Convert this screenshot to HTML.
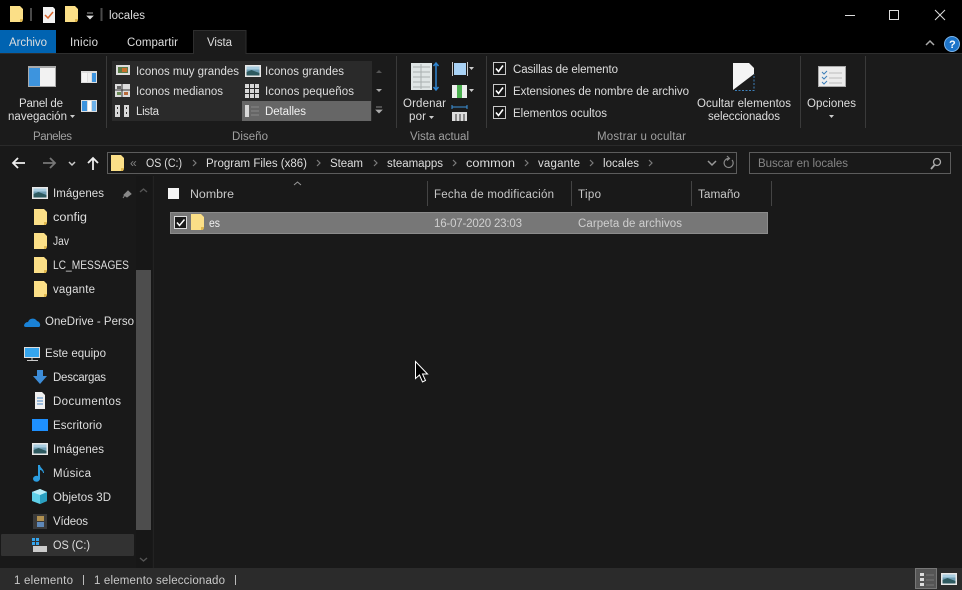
<!DOCTYPE html>
<html><head><meta charset="utf-8"><style>
html,body{margin:0;padding:0;background:#191919;width:962px;height:590px;overflow:hidden}
svg{display:block;filter:blur(.3px)}
text{font-family:"Liberation Sans",sans-serif;font-size:11.5px;fill:#dedede}
.d{fill:#a0a0a0}.g{fill:#858585}
</style></head><body>
<svg width="962" height="590" viewBox="0 0 962 590" xmlns="http://www.w3.org/2000/svg">
<defs>
<g id="f"><path d="M0 0h10l3 3v11l-1 1v1H0z" fill="#fbdf87"/><path d="M10 13h3v1l-1 2h-2z" fill="#e0b84e"/></g>
<g id="c"><rect x=".5" y=".5" width="12" height="12" fill="#151515" stroke="#c8c8c8"/><path d="M3 6.500l2.500 3L10 3.500" fill="none" stroke="#fff" stroke-width="1.600"/></g>
<path id="ch" d="M0 0l3 3-3 3" fill="none" stroke="#7c7c7c" stroke-width="1.200"/>
<g id="img"><rect width="16" height="12" fill="#e8e8e8"/><rect x="1.500" y="1.500" width="13" height="9" fill="#6f9eb5"/><path d="M1.500 7l5-2 8 3v2.500h-13z" fill="#2e5a60"/><rect x="1.500" y="1.500" width="13" height="3" fill="#a9cde0"/></g>
</defs>

<!-- title bar -->
<rect width="962" height="53" fill="#000"/>
<use href="#f" x="10" y="6"/>
<rect x="30" y="8" width="2" height="13" fill="#4a4a4a"/>
<path d="M43 7h10l2 2v14H43z" fill="#f1f1f1"/><path d="M45 15l3 3 5-6" fill="none" stroke="#d9632a" stroke-width="1.500"/>
<use href="#f" x="65" y="6"/>
<path d="M87 13h6M87 16h6l-3 3z" fill="#ddd" stroke="#ddd" stroke-width=".7"/>
<rect x="100.500" y="8" width="2" height="13" fill="#4a4a4a"/>
<text x="109" y="19" textLength="36">locales</text>
<rect x="845" y="15" width="10" height="1" fill="#ddd"/>
<rect x="889.500" y="10.500" width="9" height="9" fill="none" stroke="#ddd"/>
<path d="M935 10l10 10M945 10l-10 10" stroke="#ddd" fill="none"/>

<!-- tabs -->
<rect x="0" y="30" width="56" height="23" fill="#0063b1"/>
<text x="9" y="46" textLength="38">Archivo</text>
<text x="70" y="46" textLength="28">Inicio</text>
<text x="127" y="46" textLength="51">Compartir</text>
<path d="M926 45l4-4 4 4" fill="none" stroke="#aaa" stroke-width="1.500"/>
<circle cx="952" cy="44" r="7.500" fill="#1d74c9" stroke="#7db5ea"/>
<text x="949" y="48" style="font-size:11px;font-weight:bold;fill:#fff">?</text>

<!-- ribbon -->
<rect x="0" y="53" width="962" height="92" fill="#1b1b1b"/>
<rect x="0" y="53" width="962" height="1" fill="#2e2e2e"/>
<rect x="193" y="30" width="53" height="24" fill="#1b1b1b"/>
<path d="M193.500 54V30.500h52.500V54" fill="none" stroke="#2e2e2e"/>
<text x="207" y="46" textLength="25">Vista</text>
<rect y="145" width="962" height="1" fill="#2a2a2a"/>
<g fill="#3a3a3a"><rect x="106" y="56" width="1" height="72"/><rect x="396" y="56" width="1" height="72"/><rect x="486" y="56" width="1" height="72"/><rect x="800" y="56" width="1" height="72"/><rect x="865" y="56" width="1" height="72"/></g>

<!-- paneles -->
<rect x="28" y="66" width="28" height="21" fill="#aaa"/><rect x="29" y="68" width="11" height="18" fill="#3d94de"/><rect x="40" y="68" width="15" height="18" fill="#f2f2f2"/>
<rect x="81" y="71" width="16" height="12" fill="#ddd"/><rect x="82" y="73" width="5" height="9" fill="#f4f4f4"/><rect x="88" y="73" width="3" height="9" fill="#eee"/><rect x="92" y="73" width="4" height="9" fill="#3d94de"/>
<rect x="81" y="100" width="16" height="12" fill="#ddd"/><rect x="82" y="101" width="5" height="10" fill="#3d94de"/><rect x="88" y="101" width="3" height="10" fill="#fff"/><rect x="92" y="101" width="4" height="10" fill="#6eb1e8"/>
<text x="19" y="107" textLength="44">Panel de</text>
<text x="8" y="120" textLength="59">navegación</text>
<path d="M70 115h5l-2.500 3z" fill="#ccc"/>
<text class="d" x="33" y="140" textLength="39">Paneles</text>

<!-- gallery -->
<rect x="112" y="61" width="260" height="60" fill="#2a2a2a"/>
<rect x="242" y="101" width="129" height="20" fill="#666"/>
<g transform="translate(116 65)"><rect width="14" height="10" fill="#ddd"/><rect x="2" y="2" width="10" height="6" fill="#5b7d4a"/><rect x="6" y="3" width="5" height="4" fill="#c9702e"/></g>
<use href="#img" x="245" y="65"/>
<g transform="translate(115 84)"><rect width="15" height="13" fill="#ddd"/><path d="M0 6h15M7 0v13" stroke="#333"/><rect x="2" y="2" width="4" height="3" fill="#666"/><rect x="9" y="8" width="4" height="3" fill="#b86a3a"/><rect x="2" y="8" width="4" height="3" fill="#6a8a55"/></g>
<g fill="#d8d8d8"><rect x="245" y="84" width="4" height="4"/><rect x="250" y="84" width="4" height="4"/><rect x="255" y="84" width="4" height="4"/><rect x="245" y="89" width="4" height="4"/><rect x="250" y="89" width="4" height="4"/><rect x="255" y="89" width="4" height="4"/><rect x="245" y="94" width="4" height="4"/><rect x="250" y="94" width="4" height="4"/><rect x="255" y="94" width="4" height="4"/></g>
<g fill="#d8d8d8"><rect x="115" y="105" width="5" height="12"/><rect x="124" y="105" width="5" height="12"/></g>
<g fill="#333"><rect x="117" y="107" width="1" height="2"/><rect x="117" y="112" width="1" height="2"/><rect x="126" y="107" width="1" height="2"/><rect x="126" y="112" width="1" height="2"/></g>
<rect x="245" y="105" width="4" height="12" fill="#d8d8d8"/><path d="M251 107h8M251 111h8M251 115h8" stroke="#888"/>
<text x="136" y="75" textLength="103">Iconos muy grandes</text>
<text x="265" y="75" textLength="79">Iconos grandes</text>
<text x="136" y="95" textLength="87">Iconos medianos</text>
<text x="265" y="95" textLength="89">Iconos pequeños</text>
<text x="136" y="115" textLength="23">Lista</text>
<text x="265" y="115" textLength="41" style="fill:#f0f0f0">Detalles</text>
<path d="M376 73l3-3 3 3z" fill="#555"/><path d="M376 89l3 3 3-3z" fill="#aaa"/><path d="M376 107h6M376 110l3 3 3-3z" stroke="#aaa" fill="#aaa" stroke-width=".7"/>
<text class="d" x="232" y="140" textLength="36">Diseño</text>

<!-- vista actual -->
<rect x="411" y="63" width="21" height="27" fill="#dfe5e5"/><path d="M413 67h17M413 72h17M413 77h17M413 82h17M413 87h17M421 64v25" stroke="#a8b0b0"/>
<path d="M436 63v27M433.500 66l2.500-3 2.500 3M433.500 87l2.500 3 2.500-3" fill="none" stroke="#2f86d2" stroke-width="1.500"/>
<path d="M453 62.500h-.5v13h.5M467 62.500h.5v13h-.5" fill="none" stroke="#ccc"/><rect x="454" y="63" width="12" height="12" fill="#a9d2f5"/><path d="M469 67h5l-2.500 3z" fill="#ccc"/>
<rect x="452" y="85" width="15" height="13" fill="#eee"/><rect x="457" y="85" width="5" height="13" fill="#4caf50"/><path d="M469 89h5l-2.500 3z" fill="#ccc"/>
<path d="M452 107h15M452 105v4M467 105v4" stroke="#3d94de"/>
<rect x="452" y="112" width="15" height="9" fill="#ddd"/><path d="M456 114v7M460 114v7M464 114v7" stroke="#333"/>
<text x="403" y="107" textLength="43">Ordenar</text>
<text x="409" y="120" textLength="17">por</text>
<path d="M429 116h5l-2.500 3z" fill="#ccc"/>
<text class="d" x="410" y="140" textLength="59">Vista actual</text>

<!-- checkboxes -->
<use href="#c" x="493" y="62"/><use href="#c" x="493" y="84"/><use href="#c" x="493" y="106"/>
<text x="513" y="73" textLength="105">Casillas de elemento</text>
<text x="513" y="95" textLength="176">Extensiones de nombre de archivo</text>
<text x="513" y="117" textLength="94">Elementos ocultos</text>
<path d="M733 63h16l5 5v6l-21 16z" fill="#f4f4f4"/><path d="M735 90.500h19V74" fill="none" stroke="#3d7fb8" stroke-dasharray="2 1.500"/>
<text x="697" y="107" textLength="94">Ocultar elementos</text>
<text x="708" y="120" textLength="72">seleccionados</text>
<text class="d" x="597" y="140" textLength="89">Mostrar u ocultar</text>

<!-- opciones -->
<rect x="818.500" y="66.500" width="27" height="20" fill="#ececec" stroke="#aaa"/><path d="M829 73h13M829 78h13M829 83h13" stroke="#bbb"/><path d="M822 72l2 2 3-3M822 77l2 2 3-3M822 82l2 2 3-3" fill="none" stroke="#3d7fb8"/>
<text x="807" y="107" textLength="49">Opciones</text>
<path d="M829 115h5l-2.500 3z" fill="#ccc"/>

<!-- nav -->
<path d="M14 163h11M18 158l-5 5 5 5" fill="none" stroke="#eee" stroke-width="1.800"/>
<path d="M43 163h11M50 158l5 5-5 5" fill="none" stroke="#777" stroke-width="1.800"/>
<path d="M69 162l3 3 3-3" fill="none" stroke="#ccc" stroke-width="1.500"/>
<path d="M93 170V158M88 163l5-5 5 5" fill="none" stroke="#eee" stroke-width="1.800"/>
<rect x="107.500" y="152.500" width="629" height="21" fill="#191919" stroke="#5c5c5c"/>
<use href="#f" x="111" y="155"/>
<text class="g" x="130" y="167" style="font-size:12px">«</text>
<text x="146" y="167" textLength="36" lengthAdjust="spacingAndGlyphs">OS (C:)</text>
<use href="#ch" x="193" y="160"/>
<text x="206" y="167" textLength="101">Program Files (x86)</text>
<use href="#ch" x="317" y="160"/>
<text x="330" y="167" textLength="33">Steam</text>
<use href="#ch" x="374" y="160"/>
<text x="387" y="167" textLength="56">steamapps</text>
<use href="#ch" x="453" y="160"/>
<text x="466" y="167" textLength="49" lengthAdjust="spacingAndGlyphs">common</text>
<use href="#ch" x="525" y="160"/>
<text x="538" y="167" textLength="42">vagante</text>
<use href="#ch" x="590" y="160"/>
<text x="603" y="167" textLength="36">locales</text>
<use href="#ch" x="649" y="160"/>
<path d="M708 161l4 4 4-4" fill="none" stroke="#999" stroke-width="1.500"/>
<path d="M732 160a4.500 4.500 0 1 1-3-1.500M727 156l2.500 2.500-2.500 2" fill="none" stroke="#888" stroke-width="1.200"/>
<rect x="749.500" y="152.500" width="201" height="21" fill="#191919" stroke="#5c5c5c"/>
<text class="g" x="758" y="167" textLength="90">Buscar en locales</text>
<circle cx="937" cy="162" r="3.500" fill="none" stroke="#aaa" stroke-width="1.300"/><path d="M934.500 165l-3.500 4" stroke="#aaa" stroke-width="1.800"/>

<!-- sidebar -->
<rect x="136" y="176" width="16" height="392" fill="#171717"/>
<rect x="136" y="270" width="15" height="260" fill="#4d4d4d"/>
<path d="M140 192l3.500-3 3.500 3M140 558l3.500 3 3.500-3" fill="none" stroke="#555" stroke-width="1.400"/>
<rect x="1" y="534" width="133" height="22" rx="1" fill="#323232"/>
<rect x="153" y="176" width="1" height="392" fill="#222"/>
<use href="#img" x="32" y="187"/>
<path d="M124 195l4-4 3 3-4 3zM125 195l-2 3" fill="#888" stroke="#888"/>
<use href="#f" x="34" y="209"/><use href="#f" x="34" y="233"/><use href="#f" x="34" y="257"/><use href="#f" x="34" y="281"/>
<path d="M24 326a4 4 0 0 1 4-4 5 5 0 0 1 9-1 4 4 0 0 1 3 5 2 2 0 0 1-1 1H26a2 2 0 0 1-2-1z" fill="#1a82d6"/>
<rect x="24.500" y="347.500" width="15" height="10" fill="#35a5ee" stroke="#ddd"/><path d="M32 358v2M27 360.500h11" stroke="#ccc"/>
<path d="M37 370h6v6h4l-7 8-7-8h4z" fill="#3d8dd8"/>
<path d="M35 392h7l3 3v14H35z" fill="#eee"/><path d="M37 398h6M37 401h6M37 404h6" stroke="#4a88c5"/>
<rect x="32" y="419" width="16" height="12" fill="#1e90ff"/>
<use href="#img" x="32" y="443"/>
<path d="M38 465h2c0 3 4 4 4 8h-1c0-2-2-3-3-3v9a3.500 3 0 1 1-2-3z" fill="#2b9de0"/>
<path d="M40 489l7 3v9l-7 3-8-3v-9z" fill="#5fd0e8"/><path d="M40 495v9l7-3v-9z" fill="#2a9fc0"/><path d="M32 492l8 3 7-3-7-3z" fill="#b9edf7"/>
<rect x="33" y="514" width="14" height="15" fill="#3a3a3a"/><rect x="37" y="516" width="7" height="5" fill="#b09050"/><rect x="37" y="522" width="7" height="5" fill="#5f88b8"/>
<rect x="33" y="546" width="14" height="6" fill="#ccc"/><g fill="#35a5ee"><rect x="32" y="538" width="3" height="3"/><rect x="36" y="538" width="3" height="3"/><rect x="32" y="542" width="3" height="3"/><rect x="36" y="542" width="3" height="3"/></g>

<text x="53" y="197" textLength="51">Imágenes</text>
<text x="53" y="221" textLength="34" lengthAdjust="spacingAndGlyphs">config</text>
<text x="53" y="245" textLength="16" lengthAdjust="spacingAndGlyphs">Jav</text>
<text x="53" y="269" textLength="76" lengthAdjust="spacingAndGlyphs">LC_MESSAGES</text>
<text x="53" y="293" textLength="42">vagante</text>
<text x="45" y="325" textLength="89">OneDrive - Perso</text>
<text x="45" y="357" textLength="61">Este equipo</text>
<text x="53" y="381" textLength="53">Descargas</text>
<text x="53" y="405" textLength="68">Documentos</text>
<text x="53" y="429" textLength="49">Escritorio</text>
<text x="53" y="453" textLength="51">Imágenes</text>
<text x="53" y="477" textLength="38">Música</text>
<text x="53" y="501" textLength="58">Objetos 3D</text>
<text x="53" y="525" textLength="35">Vídeos</text>
<text x="53" y="549" textLength="37" lengthAdjust="spacingAndGlyphs">OS (C:)</text>

<!-- column header -->
<rect x="168" y="188" width="11" height="11" fill="#f4f4f4"/>
<path d="M294 185l3.500-3 3.500 3" fill="none" stroke="#999"/>
<text x="190" y="198" textLength="44" lengthAdjust="spacingAndGlyphs" style="fill:#c8c8c8">Nombre</text>
<text x="434" y="198" textLength="120" style="fill:#c8c8c8">Fecha de modificación</text>
<text x="578" y="198" textLength="23" style="fill:#c8c8c8">Tipo</text>
<text x="698" y="198" textLength="42" lengthAdjust="spacingAndGlyphs" style="fill:#c8c8c8">Tamaño</text>
<g fill="#444"><rect x="427" y="181" width="1" height="25"/><rect x="571" y="181" width="1" height="25"/><rect x="691" y="181" width="1" height="25"/><rect x="771" y="181" width="1" height="25"/></g>

<!-- row -->
<rect x="170.500" y="212.500" width="597" height="21" fill="#777" stroke="#8c8c8c"/>
<rect x="174.500" y="216.500" width="12" height="12" fill="#1a1a1a" stroke="#ddd"/><path d="M177 222.500l2.500 3 5-6" fill="none" stroke="#fff" stroke-width="1.500"/>
<use href="#f" x="191" y="214"/>
<text x="209" y="227" textLength="11" lengthAdjust="spacingAndGlyphs" style="fill:#f0f0f0">es</text>
<text x="434" y="227" textLength="88" style="fill:#cfcfcf">16-07-2020 23:03</text>
<text x="578" y="227" textLength="104" style="fill:#cfcfcf">Carpeta de archivos</text>

<!-- cursor -->
<path d="M415.500 361.500v17l4-3.500 3 7 3-1.500-3-6.500h5z" fill="#000" stroke="#fff"/>

<!-- status bar -->
<rect y="568" width="962" height="22" fill="#2b2b2b"/>
<text x="14" y="584" textLength="59" style="fill:#c8c8c8">1 elemento</text>
<rect x="83" y="575" width="1" height="10" fill="#bbb"/>
<text x="94" y="584" textLength="131" style="fill:#c8c8c8">1 elemento seleccionado</text>
<rect x="235" y="575" width="1" height="10" fill="#bbb"/>
<rect x="915.500" y="568.500" width="21" height="20" fill="#555" stroke="#777"/>
<g fill="#ddd"><rect x="920" y="573" width="4" height="3"/><rect x="920" y="578" width="4" height="3"/><rect x="920" y="583" width="4" height="3"/></g><path d="M926 575h8M926 580h8M926 585h8" stroke="#777"/>
<use href="#img" x="941" y="573"/>
</svg>
</body></html>
